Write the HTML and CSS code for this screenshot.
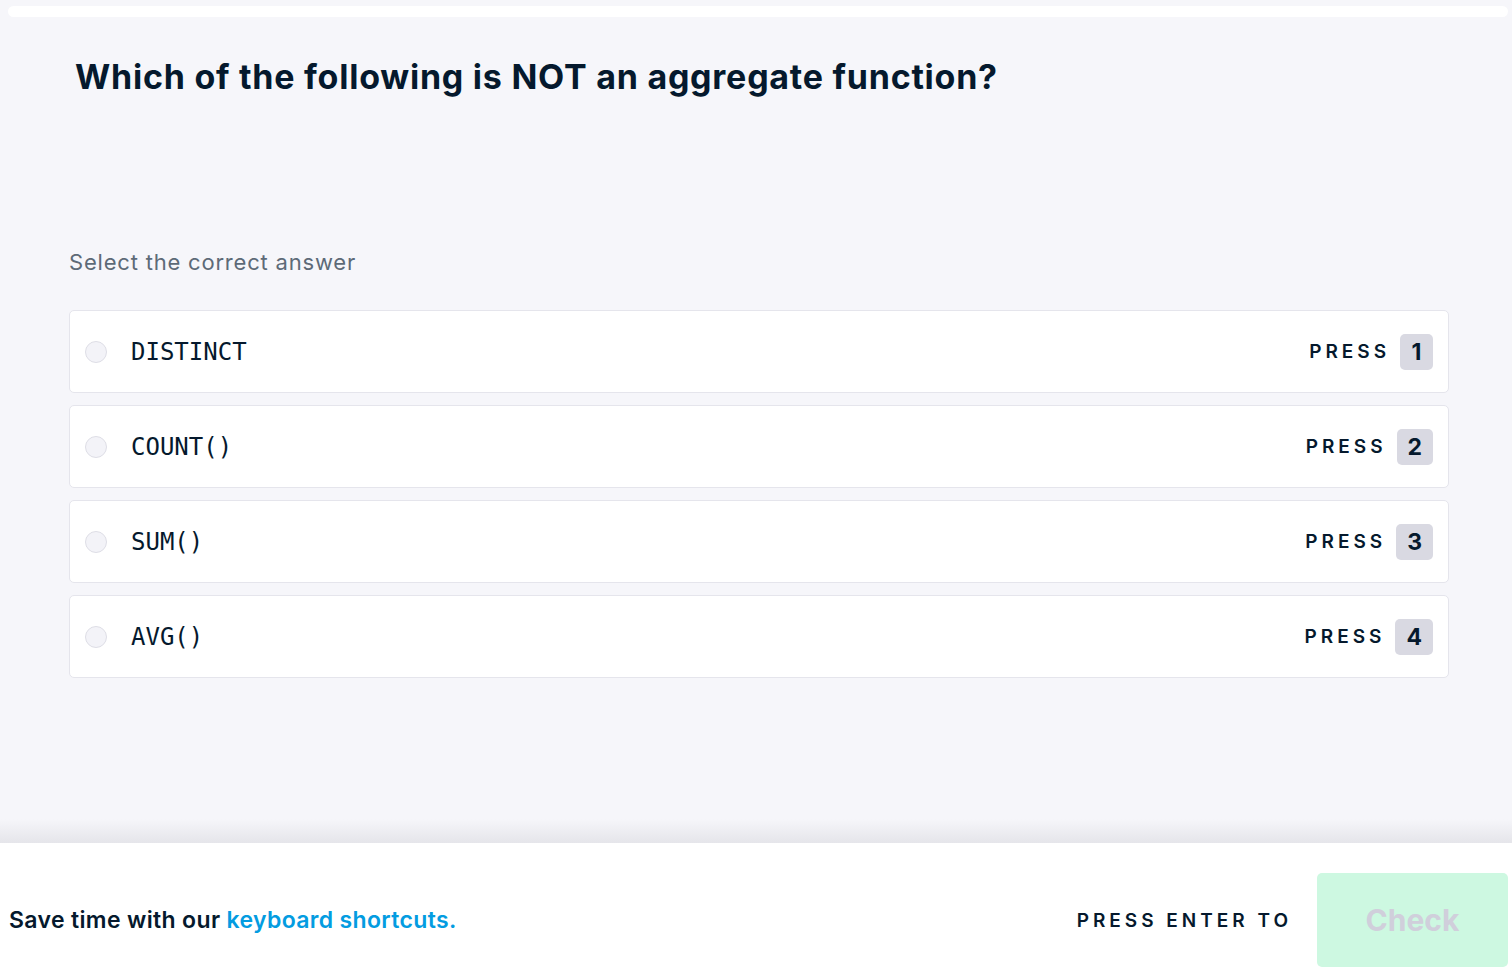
FILE: index.html
```html
<!DOCTYPE html>
<html lang="en">
<head>
<meta charset="utf-8">
<title>Quiz</title>
<link rel="stylesheet" href="styles.css">
</head>
<body>
<div class="page">
  <main class="main">
    <div class="progress"></div>
    <h1 class="question">Which of the following is NOT an aggregate function?</h1>
    <section class="answers">
      <p class="hint">Select the correct answer</p>
      <ul class="options">
        <li class="option">
          <span class="radio"></span>
          <code class="label">DISTINCT</code>
          <span class="press">PRESS</span>
          <kbd class="key">1</kbd>
        </li>
        <li class="option">
          <span class="radio"></span>
          <code class="label">COUNT()</code>
          <span class="press">PRESS</span>
          <kbd class="key">2</kbd>
        </li>
        <li class="option">
          <span class="radio"></span>
          <code class="label">SUM()</code>
          <span class="press">PRESS</span>
          <kbd class="key">3</kbd>
        </li>
        <li class="option">
          <span class="radio"></span>
          <code class="label">AVG()</code>
          <span class="press">PRESS</span>
          <kbd class="key">4</kbd>
        </li>
      </ul>
    </section>
  </main>
  <footer class="footer">
    <p class="tip">Save time with our <a class="link" href="#">keyboard shortcuts.</a></p>
    <span class="enter">PRESS ENTER TO</span>
    <button class="check" type="button">Check</button>
  </footer>
</div>
</body>
</html>
```
FILE: styles.css
```css
* { box-sizing: border-box; }
html, body {
  margin: 0;
  padding: 0;
  background: #f6f6fa;
  font-family: Inter, "Noto Sans", sans-serif;
  color: #05192d;
}
.page {
  height: 968px;
  display: flex;
  flex-direction: column;
  overflow: hidden;
}
.main {
  height: 843px;
  padding: 6px 4px 0 8px;
  display: flex;
  flex-direction: column;
}
.progress {
  height: 11px;
  border-radius: 6px;
  background: #ffffff;
}
.question {
  margin: 38px 0 0 67px;
  font-size: 34px;
  line-height: 44px;
  font-weight: 700;
  letter-spacing: 0.75px;
}
.answers {
  margin-top: 148px;
  padding: 0 59px 0 61px;
}
.hint {
  margin: 0;
  font-size: 22px;
  line-height: 30px;
  color: #5d6a77;
  font-weight: 400;
  letter-spacing: 0.8px;
}
.options {
  list-style: none;
  margin: 33px 0 0;
  padding: 0;
  display: flex;
  flex-direction: column;
  gap: 12px;
}
.option {
  height: 83px;
  display: flex;
  align-items: center;
  padding: 0 15px;
  background: #ffffff;
  border: 1px solid #e5e5ec;
  border-radius: 5px;
}
.radio {
  width: 22px;
  height: 22px;
  border-radius: 50%;
  background: #f3f3f8;
  border: 1px solid #dedee6;
  flex: none;
}
.label {
  margin-left: 24px;
  flex: 1;
  font-family: "DejaVu Sans Mono", "Liberation Mono", monospace;
  font-size: 24px;
  color: #05192d;
}
.press {
  font-size: 19px;
  font-weight: 600;
  letter-spacing: 4px;
  margin-right: 10px;
}
.key {
  min-width: 33px;
  height: 36px;
  padding: 0 11px;
  display: flex;
  align-items: center;
  justify-content: center;
  border-radius: 5px;
  background: #d9d9e2;
  font-family: Inter, "Noto Sans", sans-serif;
  font-size: 23px;
  font-weight: 700;
  color: #05192d;
}
.footer {
  position: relative;
  height: 125px;
  flex: none;
  background: #ffffff;
  display: flex;
  align-items: center;
  padding: 30px 4px 1px 9px;
}
.footer::before {
  content: "";
  position: absolute;
  left: 0;
  right: 0;
  top: -24px;
  height: 24px;
  background: linear-gradient(to bottom, rgba(229,229,234,0) 0%, rgba(229,229,234,1) 100%);
}
.tip {
  margin: 0;
  flex: 1;
  font-size: 23px;
  font-weight: 600;
  letter-spacing: 0.35px;
}
.link {
  color: #039ce1;
  text-decoration: none;
}
.enter {
  font-size: 19px;
  font-weight: 600;
  letter-spacing: 4px;
  margin-right: 25px;
}
.check {
  width: 191px;
  height: 94px;
  border: none;
  border-radius: 5px;
  background: #cdf8e1;
  color: #d0cfdb;
  font-family: Inter, "Noto Sans", sans-serif;
  font-size: 30px;
  font-weight: 700;
}
```
